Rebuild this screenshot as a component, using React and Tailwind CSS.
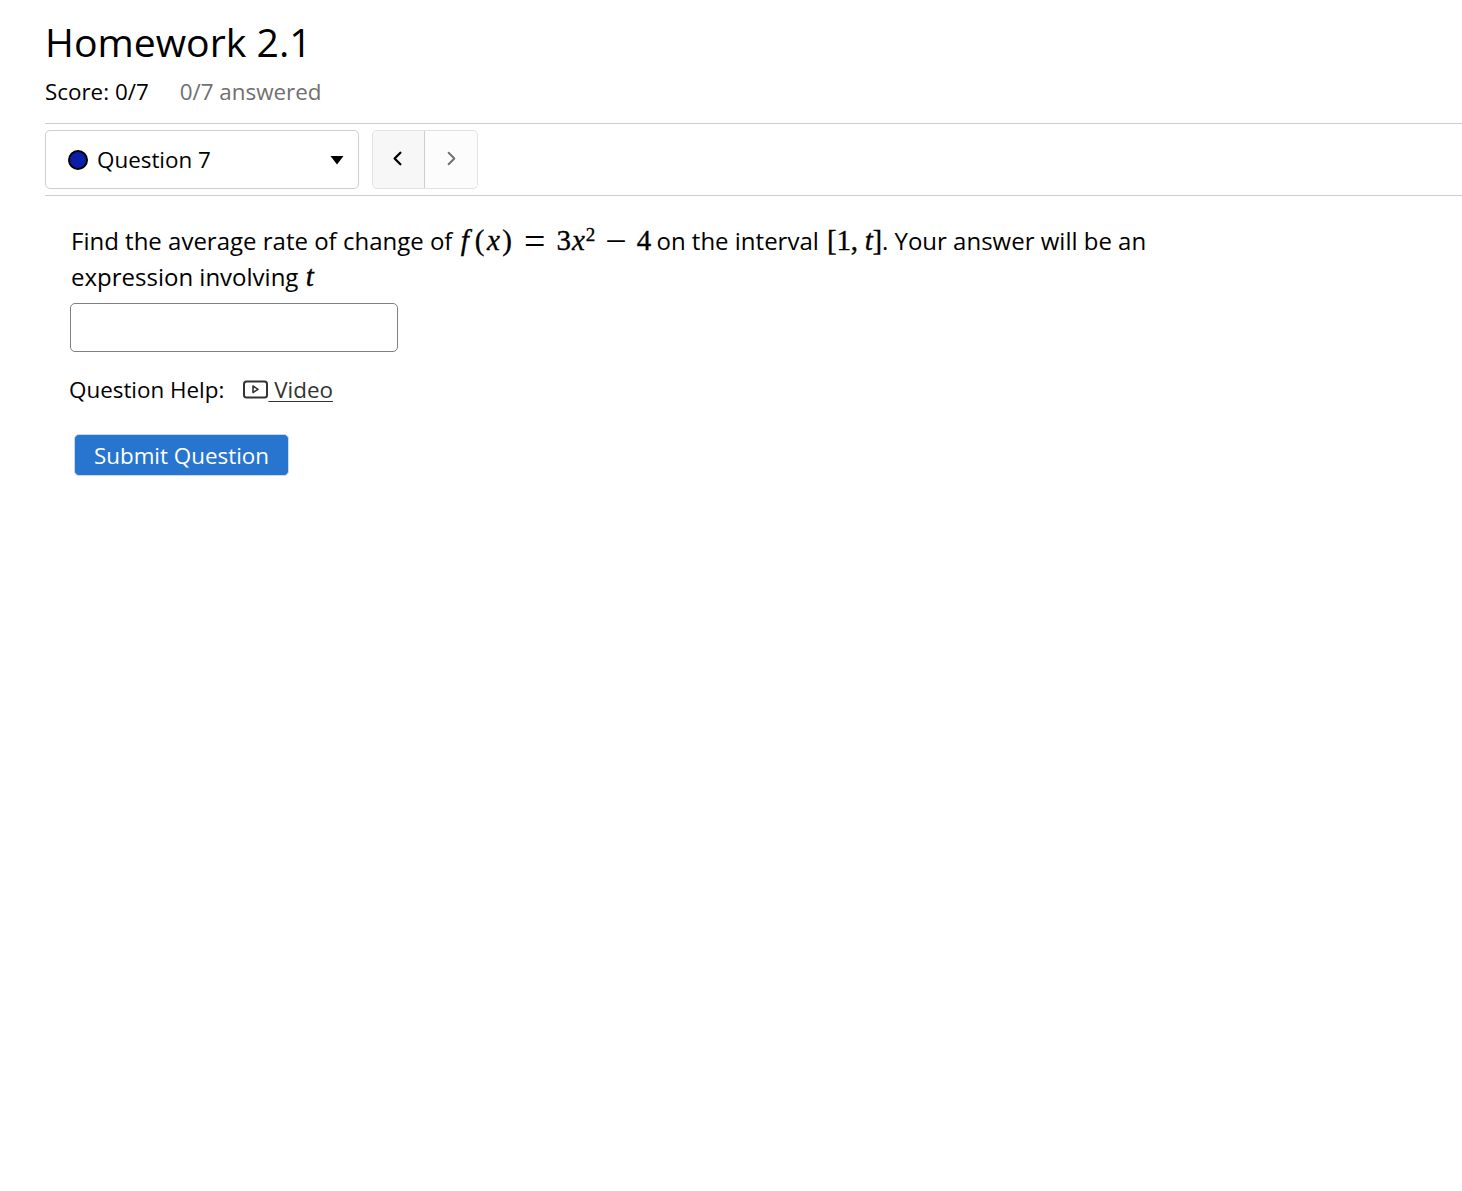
import { ChevronLeft, ChevronRight } from 'lucide-react'

const mathClass = "font-['Liberation_Serif',serif] text-[29px] leading-none [-webkit-text-stroke:0.35px_black]"
const opClass = "text-[38px] leading-[0] align-[-4px] [-webkit-text-stroke:0px_black]"

function Var({ children }) {
  return <i className="mx-[1px]">{children}</i>
}

export default function App() {
  return (
    <div className="min-h-screen bg-white pl-[45px] font-['Open_Sans',sans-serif] text-black">
      <h1 className="pt-[15px] text-[39.2px] leading-[54px] font-normal">Homework 2.1</h1>

      <div className="mt-[7px] mb-[1px] flex h-[32px] items-center text-[22.4px]">
        <span>Score: 0/7</span>
        <span className="ml-[31px] text-[#707070]">0/7 answered</span>
      </div>

      {/* Question nav */}
      <div className="mt-[15px] flex h-[73px] items-center gap-[13px] border-y border-[#cfcfcf]">
        <div className="flex h-[59px] w-[314px] items-center rounded-[5px] border border-[#cfcfcf] pl-[22px] pr-[14px]">
          <span className="h-[20px] w-[20px] rounded-full border-2 border-black bg-[#0a1fa8]" />
          <span className="ml-[9px] text-[22.4px]">Question 7</span>
          <svg className="ml-auto" width="14" height="10" viewBox="0 0 14 10">
            <path d="M0.5 1h13L7 9.5z" fill="#000" />
          </svg>
        </div>
        <div className="flex h-[59px] w-[106px] rounded-[5px] border border-[#e2e2e2]">
          <button className="flex w-[52px] items-center justify-center rounded-l-[5px] border-r border-[#cfcfcf] bg-[#f7f7f7] pb-[3px] pr-[2px] text-black">
            <ChevronLeft size={23} strokeWidth={2.4} />
          </button>
          <button className="flex flex-1 items-center justify-center rounded-r-[5px] bg-[#fcfcfc] pb-[3px] text-[#707070]">
            <ChevronRight size={23} strokeWidth={2} />
          </button>
        </div>
      </div>

      {/* Question body */}
      <div className="pl-[25px]">
        <p className="mt-[27px] w-[1100px] pl-[1px] text-[24px] leading-[36px]">
          Find the average rate of change of{' '}
          <span className={`${mathClass} ml-[1px] -mr-[1px]`}>
            <Var>f</Var><span className="ml-[5px]">(</span><span className="mx-[1.5px]"><Var>x</Var></span>)
            <span className={`${opClass} ml-[12px] mr-[11px]`}>=</span>3<Var>x</Var>
            <sup className="text-[19px]">2</sup>
            <span className={`${opClass} mx-[10px]`}>−</span>4
          </span>{' '}
          on the interval <span className={`${mathClass} ml-[2px] tracking-[-0.25px]`}>[1, <i>t</i>]</span>. Your answer will be an
          expression involving <span className={mathClass}><Var>t</Var></span>
        </p>

        <input className="mt-[8px] block h-[49px] w-[328px] rounded-[5px] border border-[#808080] bg-white" type="text" />

        <div className="mt-[21px] -ml-[1px] flex h-[34px] items-center text-[22.4px]">
          <span>Question Help:</span>
          <a href="#" className="ml-[19px] flex items-center text-[#333333]">
            <svg width="26" height="20" viewBox="0 0 26 20" fill="none" stroke="#333333" strokeWidth="2">
              <rect x="1" y="1.5" width="23" height="16" rx="2.5" />
              <path d="M10 6v6.5l5-3.2z" fill="none" strokeWidth="1.6" strokeLinejoin="round" />
            </svg>
            <span className="-ml-[1px] underline decoration-1 underline-offset-[3px]">&nbsp;Video</span>
          </a>
        </div>

        <button className="mt-[27px] ml-[4px] block h-[42px] w-[215px] rounded-[5px] border border-[#c9d8ea] bg-[#2775cf] pt-[1px] text-[22.4px] text-white">
          Submit Question
        </button>
      </div>
    </div>
  )
}
